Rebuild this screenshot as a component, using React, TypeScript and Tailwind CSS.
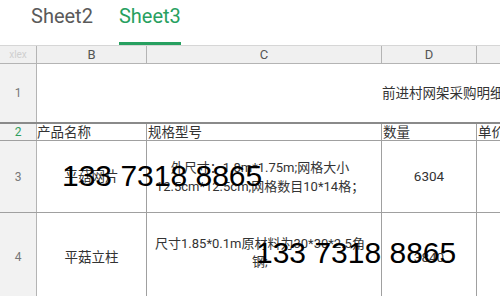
import React from 'react';

const font = { fontFamily: 'Roboto, "Noto Sans CJK SC", sans-serif' };

function RowHead({ label, green }: { label: string; green?: boolean }) {
  return (
    <div
      className={`w-[37px] shrink-0 h-full flex items-center justify-center bg-[#f2f2f2] border-r border-[#b4b4b4] text-[12px] ${
        green ? 'text-[#2f9e5e]' : 'text-[#777]'
      }`}
    >
      {label}
    </div>
  );
}

export default function App() {
  return (
    <div className="w-[500px] h-[296px] overflow-hidden bg-white relative text-[#333]" style={font}>
      {/* sheet tabs */}
      <div className="h-[46px] flex gap-[26px] pl-[31px] border-b border-[#d6d6d6]">
        <div className="h-full pt-[4px] text-[20px] leading-[24px] text-[#5a5a5a]">Sheet2</div>
        <div className="h-full flex flex-col justify-between pt-[4px]">
          <span className="text-[20px] leading-[24px] text-[#27a060]">Sheet3</span>
          <div className="h-[3px] bg-[#27a060]" />
        </div>
      </div>

      {/* column letters */}
      <div className="h-[18px] flex bg-[#f0f0f0] border-b border-[#b4b4b4] text-[13px] text-[#555]">
        <div className="w-[37px] shrink-0 flex items-center justify-center border-r border-[#b4b4b4] text-[10px] text-[#cfcfcf]">
          xlex
        </div>
        <div className="w-[110px] shrink-0 flex items-center justify-center border-r border-[#b4b4b4]">B</div>
        <div className="w-[235px] shrink-0 flex items-center justify-center border-r border-[#b4b4b4]">C</div>
        <div className="w-[95px] shrink-0 flex items-center justify-center border-r border-[#b4b4b4]">D</div>
        <div className="w-[100px] shrink-0" />
      </div>

      {/* row 1: merged title */}
      <div className="h-[60px] flex border-b-2 border-[#8a8a8a]">
        <RowHead label="1" />
        <div className="flex-1 flex items-center pl-[345px] whitespace-nowrap text-[13.5px]">
          前进村网架采购明细表
        </div>
      </div>

      {/* row 2: headings */}
      <div className="h-[17px] flex border-b border-[#a0a0a0] text-[13.5px] leading-[17px]">
        <RowHead label="2" green />
        <div className="w-[110px] shrink-0 border-r border-[#a0a0a0] whitespace-nowrap">产品名称</div>
        <div className="w-[235px] shrink-0 border-r border-[#a0a0a0] pl-[1px] whitespace-nowrap">规格型号</div>
        <div className="w-[95px] shrink-0 border-r border-[#a0a0a0] pl-[1px] whitespace-nowrap">数量</div>
        <div className="w-[100px] shrink-0 pl-[1px] whitespace-nowrap">单价</div>
      </div>

      {/* row 3 */}
      <div className="h-[72px] flex border-b border-[#a0a0a0] text-[13px]">
        <RowHead label="3" />
        <div className="w-[110px] shrink-0 border-r border-[#a0a0a0] flex items-center justify-center text-[13.5px]">
          平菇网片
        </div>
        <div className="w-[235px] shrink-0 border-r border-[#a0a0a0] flex items-center justify-center pr-[8px]">
          <p className="text-center leading-[19px] whitespace-nowrap">
            外尺寸：1.8m*1.75m;网格大小
            <br />
            12.5cm*12.5cm;网格数目10*14格；
          </p>
        </div>
        <div className="w-[95px] shrink-0 border-r border-[#a0a0a0] flex items-center justify-center text-[13.5px]">
          6304
        </div>
        <div className="w-[100px] shrink-0" />
      </div>

      {/* row 4 */}
      <div className="h-[88px] flex text-[13px]">
        <RowHead label="4" />
        <div className="w-[110px] shrink-0 border-r border-[#a0a0a0] flex items-center justify-center text-[13.5px]">
          平菇立柱
        </div>
        <div className="w-[235px] shrink-0 border-r border-[#a0a0a0] flex items-center justify-center pr-[8px] pb-[8px]">
          <p className="text-center leading-[18px] whitespace-nowrap">
            尺寸1.85*0.1m原材料为30*30*2.5角
            <br />
            钢;
          </p>
        </div>
        <div className="w-[95px] shrink-0 border-r border-[#a0a0a0] flex items-center justify-center text-[13.5px]">
          3840
        </div>
        <div className="w-[100px] shrink-0" />
      </div>

      {/* watermarks */}
      <div
        className="absolute left-[62px] top-[161px] text-[30px] leading-none text-black whitespace-nowrap"
        style={{ fontFamily: '"Liberation Sans", Arial, sans-serif' }}
      >
        133 7318 8865
      </div>
      <div
        className="absolute left-[256px] top-[238px] text-[30px] leading-none text-black whitespace-nowrap"
        style={{ fontFamily: '"Liberation Sans", Arial, sans-serif' }}
      >
        133 7318 8865
      </div>
    </div>
  );
}
